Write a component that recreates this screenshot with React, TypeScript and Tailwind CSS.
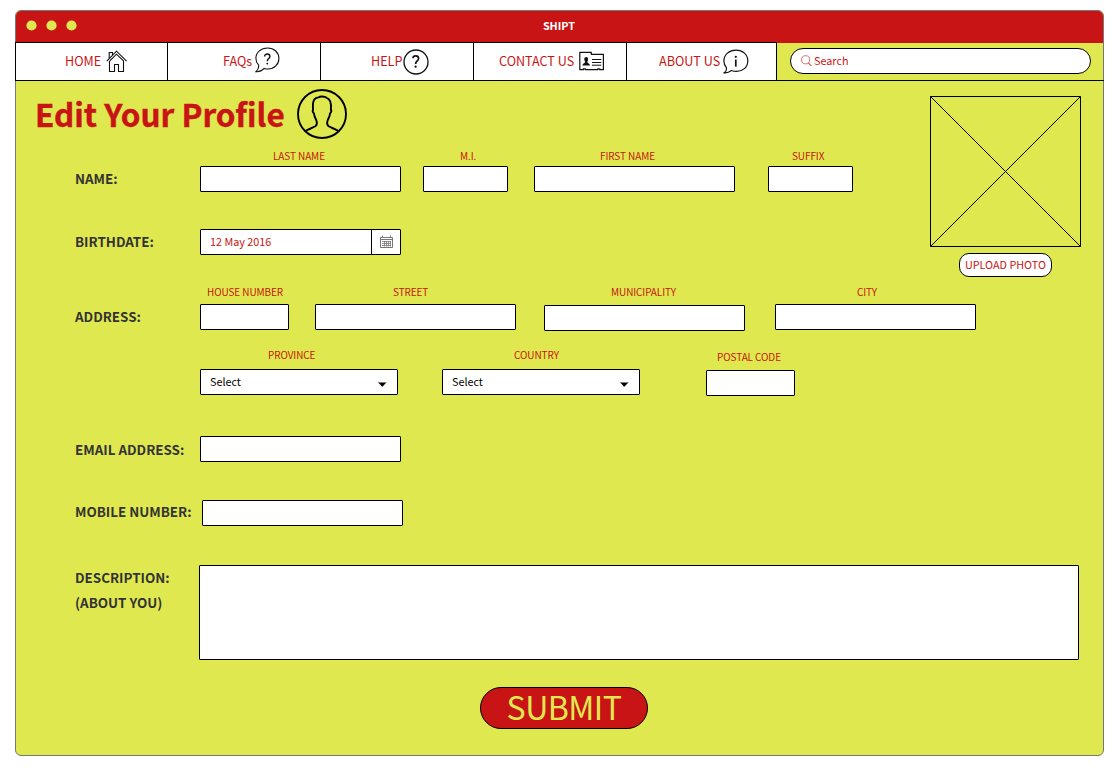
import type { ReactNode } from "react";

const ink = "#111";

function HomeIcon() {
  return (
    <svg className="-mt-[2px]" width="22" height="24" viewBox="0 0 22 24" fill="none" stroke={ink} strokeWidth="1.1">
      <path d="M0.8 12.2 10.5 2.2 20.6 12.2M3.8 11.8 10.5 5.2 17.8 12.2" />
      <path d="M3.2 9.5V3.5H6.5V6" />
      <path d="M3.5 12V22.5H8.5V15.5H12.5V22.5H17.5V12" />
    </svg>
  );
}

function ChatQuestionIcon() {
  return (
    <svg className="-mt-1" width="25" height="26" viewBox="0 0 25 26" fill="none" stroke={ink} strokeWidth="1.1">
      <path d="M3.6 18.2C1.8 16.2 0.9 13.8 0.9 11.2 0.9 5.2 6 1 12.6 1 19.2 1 23.9 5.5 23.9 11.4 23.9 17.4 19.2 22 13 22 11.6 22 10.4 21.8 9.2 21.4 7 23.8 4 25 1 24.7 3 23 4 20.8 3.6 18.2Z" />
      <path strokeWidth="1.4" d="M9.6 9.6C9.6 7.9 10.7 7 12.2 7 13.8 7 14.9 7.9 14.9 9.4 14.9 11.7 12.3 11.5 12.3 14.2" />
      <circle cx="12.3" cy="16.6" r="0.9" fill={ink} stroke="none" />
    </svg>
  );
}

function HelpIcon() {
  return (
    <svg width="26" height="26" viewBox="0 0 26 26" fill="none" stroke={ink} strokeWidth="1.3">
      <circle cx="13" cy="13" r="12" />
      <path strokeWidth="1.7" d="M10 9.2C10 7.7 11.2 6.9 12.8 6.9 14.5 6.9 15.6 8 15.6 9.4 15.6 12 12.6 12 12.6 15" />
      <circle cx="12.6" cy="17.7" r="1.1" fill={ink} stroke="none" />
    </svg>
  );
}

function ContactCardIcon() {
  return (
    <svg className="-mt-[2px]" width="26" height="20" viewBox="0 0 26 20" fill="none" stroke={ink} strokeWidth="1.2" strokeLinejoin="round">
      <path d="M0.8 1.3H12.3V3.3H24.4V18.7H20.8V17.8H18.8V18.7H6.4V17.8H4.4V18.7H0.8Z" />
      <path fill={ink} stroke="none" d="M7.2 6C8.6 6 9.2 7 9.1 8.2 9 9.4 8.6 10.1 8.4 10.6V11.6C8.8 12.4 10.8 12.4 11 14.4H3.4C3.6 12.4 5.6 12.4 6 11.6V10.6C5.8 10.1 5.4 9.4 5.3 8.2 5.2 7 5.8 6 7.2 6Z" />
      <path strokeWidth="1" d="M13 8.5H22.3M13 11.5H22.3M13 14.2H22.3" />
    </svg>
  );
}

function InfoBubbleIcon() {
  return (
    <svg width="26" height="25" viewBox="0 0 26 25" fill="none" stroke={ink} strokeWidth="1.2">
      <path d="M3.4 18.6C1.8 16.8 0.9 14.5 0.9 12 0.9 5.5 6.3 1.1 13 1.1 19.8 1.1 24.8 5.6 24.8 12 24.8 18.4 19.6 22.4 13.4 22.4 11.5 22.4 9.9 22 8.4 21.5 6 23.4 3.5 24 1.2 23.8 3 22.5 3.8 20.8 3.4 18.6Z" />
      <path strokeWidth="1.7" d="M12.8 10.5V17.6" />
      <circle cx="12.8" cy="7.8" r="1.1" fill={ink} stroke="none" />
    </svg>
  );
}

function ProfileIcon() {
  return (
    <svg className="ml-[13px] shrink-0" width="50" height="50" viewBox="0 0 50 50" fill="none" stroke="#000" strokeWidth="1.9">
      <circle cx="25" cy="25" r="24" />
      <path d="M8.2 42.2C11.5 40 16 38.8 18.3 37.3 20.2 35.8 20 33 19.2 31 17.8 28.5 17.2 27 17 24.6 15.7 23.2 15.4 21.6 16.1 20.6 15.2 12 17.2 8.6 21.5 8.4 23 7.2 27.5 7.2 29.6 8.8 33.6 10 34.6 13.5 33.9 20.6 34.6 21.6 34.3 23.2 33 24.6 32.8 27 32.2 28.5 30.8 31 30 33 29.8 35.8 31.7 37.3 34 38.8 38.5 40 41.8 42.2" />
    </svg>
  );
}

function SearchIcon() {
  return (
    <svg width="11" height="12" viewBox="0 0 11 12" fill="none" stroke="#c81414">
      <circle cx="4.6" cy="4.8" r="4.1" strokeWidth="0.6" />
      <path strokeWidth="1" d="M7.4 7.9 10.3 11" />
    </svg>
  );
}

function CalendarIcon() {
  return (
    <svg width="13" height="14" viewBox="0 0 13 14" fill="none" stroke="#777">
      <path d="M0.5 2.5H12.5V12.5H0.5ZM0.5 4.5H12.5M2.5 0.5V3M10.5 0.5V3" />
      <path strokeWidth="0.8" d="M2 6.5H11M2 8.5H11M2 10.5H11M4.5 6V11.5M6.5 6V11.5M8.5 6V11.5M10.5 6V11.5" />
    </svg>
  );
}

function NavItem({ className, children }: { className: string; children: ReactNode }) {
  return (
    <a className={`flex h-full items-center border-t border-l border-black bg-white text-[12.6px] leading-none whitespace-nowrap text-[#c81414] ${className}`}>
      {children}
    </a>
  );
}

const box = "h-[26px] shrink-0 rounded-[1px] border border-black bg-white";

function Field({ label, width, className = "", indent, gap = "h-[20px]" }: { label: string; width: string; className?: string; indent: string; gap?: string }) {
  return (
    <label className={`flex flex-col ${width} ${className}`}>
      <FieldLabel text={label} indent={indent} gap={gap} />
      <input className={`${box} w-full`} />
    </label>
  );
}

function FieldLabel({ text, indent, gap }: { text: string; indent: string; gap: string }) {
  return (
    <span className={`block text-[10px] leading-[19px] tracking-[-0.1px] whitespace-nowrap text-[#c81414] ${gap} ${indent}`}>
      {text}
    </span>
  );
}

function SelectField({ label, indent, className = "" }: { label: string; indent: string; className?: string }) {
  return (
    <div className={`flex w-[198px] flex-col ${className}`}>
      <FieldLabel text={label} indent={indent} gap="h-[24px]" />
      <button className={`${box} flex items-center justify-between pr-[10px] pl-[9px] text-[10.8px] leading-none text-black`}>
        <span className="pb-[2px]">Select</span>
        <svg width="10" height="5" viewBox="0 0 10 5" className="mt-[4px]">
          <path d="M0.5 0.4H10C8.6 1 7.2 2.4 6.2 4Q5.3 5 4.4 4C3.4 2.4 2 1 0.5 0.4Z" />
        </svg>
      </button>
    </div>
  );
}

function RowLabel({ children, className = "" }: { children: ReactNode; className?: string }) {
  return (
    <div className={`h-[26px] w-[125px] shrink-0 text-[13.4px] leading-[25px] font-bold whitespace-nowrap text-[#333] ${className}`}>
      {children}
    </div>
  );
}

export default function App() {
  return (
    <div className="h-[768px] w-[1117px] overflow-hidden bg-white pt-[10px] pl-[15px] font-['Noto_Sans_CJK_SC',sans-serif]">
      <div className="flex h-[746px] w-[1089px] flex-col rounded-[6px] border border-[#777] bg-[#dfe94f]">
        <header className="grid h-8 shrink-0 grid-cols-3 items-center rounded-t-[5px] bg-[#c81414]">
          <svg className="mb-1 ml-[10px]" width="52" height="11" viewBox="0 0 52 11" fill="#dfe94f">
            <circle cx="5.5" cy="5.5" r="5.1" />
            <circle cx="25.5" cy="5.5" r="5.1" />
            <circle cx="45.5" cy="5.5" r="5.1" />
          </svg>
          <h1 className="pr-px pb-[3px] text-center text-[10.8px] leading-none font-bold text-white">SHIPT</h1>
        </header>

        <nav className="-mx-px -mt-px flex h-[39px] shrink-0 border-b border-black">
          <NavItem className="w-[152px] gap-[5px] pl-[49px]">HOME<HomeIcon /></NavItem>
          <NavItem className="w-[153px] gap-[3px] pl-[55px]">FAQs<ChatQuestionIcon /></NavItem>
          <NavItem className="w-[153px] gap-[1px] pl-[50px]">HELP<HelpIcon /></NavItem>
          <NavItem className="w-[153px] gap-[5px] pl-[25px]">CONTACT US<ContactCardIcon /></NavItem>
          <NavItem className="w-[151px] gap-[3px] border-r pl-[32px]">ABOUT US<InfoBubbleIcon /></NavItem>
          <div className="mt-[6px] ml-[13px] flex h-[26px] w-[301px] items-center gap-[2px] rounded-full border border-black bg-white pl-[10px] text-[10.8px] leading-none text-[#c81414]">
            <SearchIcon />
            <span className="pb-[2px]">Search</span>
          </div>
        </nav>

        <main className="flex flex-col">
          <div className="flex h-[205px] justify-between pr-[22px]">
            <div className="pl-5">
              <div className="flex h-[65px] items-center pt-[1px]">
                <h2 className="-ml-px w-[249px] pb-px text-[31.5px] leading-none font-bold whitespace-nowrap text-[#c81414] [-webkit-text-stroke:0.4px_#c81414]">Edit Your Profile</h2>
                <ProfileIcon />
              </div>
              <div className="flex items-end pl-[39px]">
                <RowLabel>NAME:</RowLabel>
                <Field label="LAST NAME" width="w-[201px]" indent="pl-[73px]" />
                <Field label="M.I." width="w-[85px]" className="ml-[22px]" indent="pl-[37px]" />
                <Field label="FIRST NAME" width="w-[201px]" className="ml-[26px]" indent="pl-[66px]" />
                <Field label="SUFFIX" width="w-[85px]" className="ml-[33px]" indent="pl-[24px]" />
              </div>
              <div className="mt-[37px] flex items-center pl-[39px]">
                <RowLabel>BIRTHDATE:</RowLabel>
                <div className={`${box} flex w-[201px]`}>
                  <span className="w-[170px] pl-[9px] text-[10.8px] leading-[23px] text-[#c81414]">12 May 2016</span>
                  <span className="flex flex-1 items-center justify-center border-l border-black"><CalendarIcon /></span>
                </div>
              </div>
            </div>
            <aside className="flex w-[151px] flex-col pt-[15px]">
              <svg width="151" height="151" viewBox="0 0 151 151" fill="none" stroke="#000">
                <path d="M0.5 0.5H150.5V150.5H0.5ZM0.5 0.5 150.5 150.5M150.5 0.5 0.5 150.5" />
              </svg>
              <button className="mt-[6px] ml-[29px] flex h-6 w-[93px] items-center justify-center rounded-[10px] border border-black bg-white pb-[2px] text-[10.8px] leading-none whitespace-nowrap text-[#c81414]">
                UPLOAD PHOTO
              </button>
            </aside>
          </div>

          <div className="flex h-[46px] pl-[59px]">
            <div className="pt-[18px]"><RowLabel>ADDRESS:</RowLabel></div>
            <Field label="HOUSE NUMBER" width="w-[89px]" indent="pl-[7px]" gap="h-[18px] mt-[-4px] mb-[4px]" />
            <Field label="STREET" width="w-[201px]" className="ml-[26px]" indent="pl-[78px]" gap="h-[18px] mt-[-4px] mb-[4px]" />
            <Field label="MUNICIPALITY" width="w-[201px]" className="ml-[28px]" indent="pl-[67px]" gap="h-[18px] mt-[-4px] mb-[5px]" />
            <Field label="CITY" width="w-[201px]" className="ml-[30px]" indent="pl-[82px]" gap="h-[18px] mt-[-4px] mb-[4px]" />
          </div>

          <div className="mt-[13px] flex pl-[184px]">
            <SelectField label="PROVINCE" indent="pl-[68px]" />
            <SelectField label="COUNTRY" className="ml-[44px]" indent="pl-[72px]" />
            <Field label="POSTAL CODE" width="w-[89px]" className="ml-[66px] pt-[2px]" indent="pl-[11px]" gap="h-[23px]" />
          </div>

          <div className="mt-[40px] flex pl-[59px]">
            <RowLabel className="pt-px">EMAIL ADDRESS:</RowLabel>
            <input className={`${box} w-[201px]`} />
          </div>

          <div className="mt-[38px] flex pl-[59px]">
            <RowLabel className="-mt-px">MOBILE NUMBER:</RowLabel>
            <input className={`${box} ml-[2px] w-[201px]`} />
          </div>

          <div className="mt-[39px] flex pl-[59px]">
            <div className="w-[124px] shrink-0">
              <RowLabel>DESCRIPTION:<br />(ABOUT YOU)</RowLabel>
            </div>
            <textarea className="block h-[95px] w-[880px] resize-none rounded-[1px] border border-black bg-white" />
          </div>

          <button className="mt-[27px] ml-[464px] flex h-[42px] w-[168px] items-center justify-center rounded-full border border-black bg-[#c81414] pb-[4px] text-[32.2px] leading-none font-normal tracking-[-0.6px] text-[#dfe94f]">
            SUBMIT
          </button>
        </main>
      </div>
    </div>
  );
}
